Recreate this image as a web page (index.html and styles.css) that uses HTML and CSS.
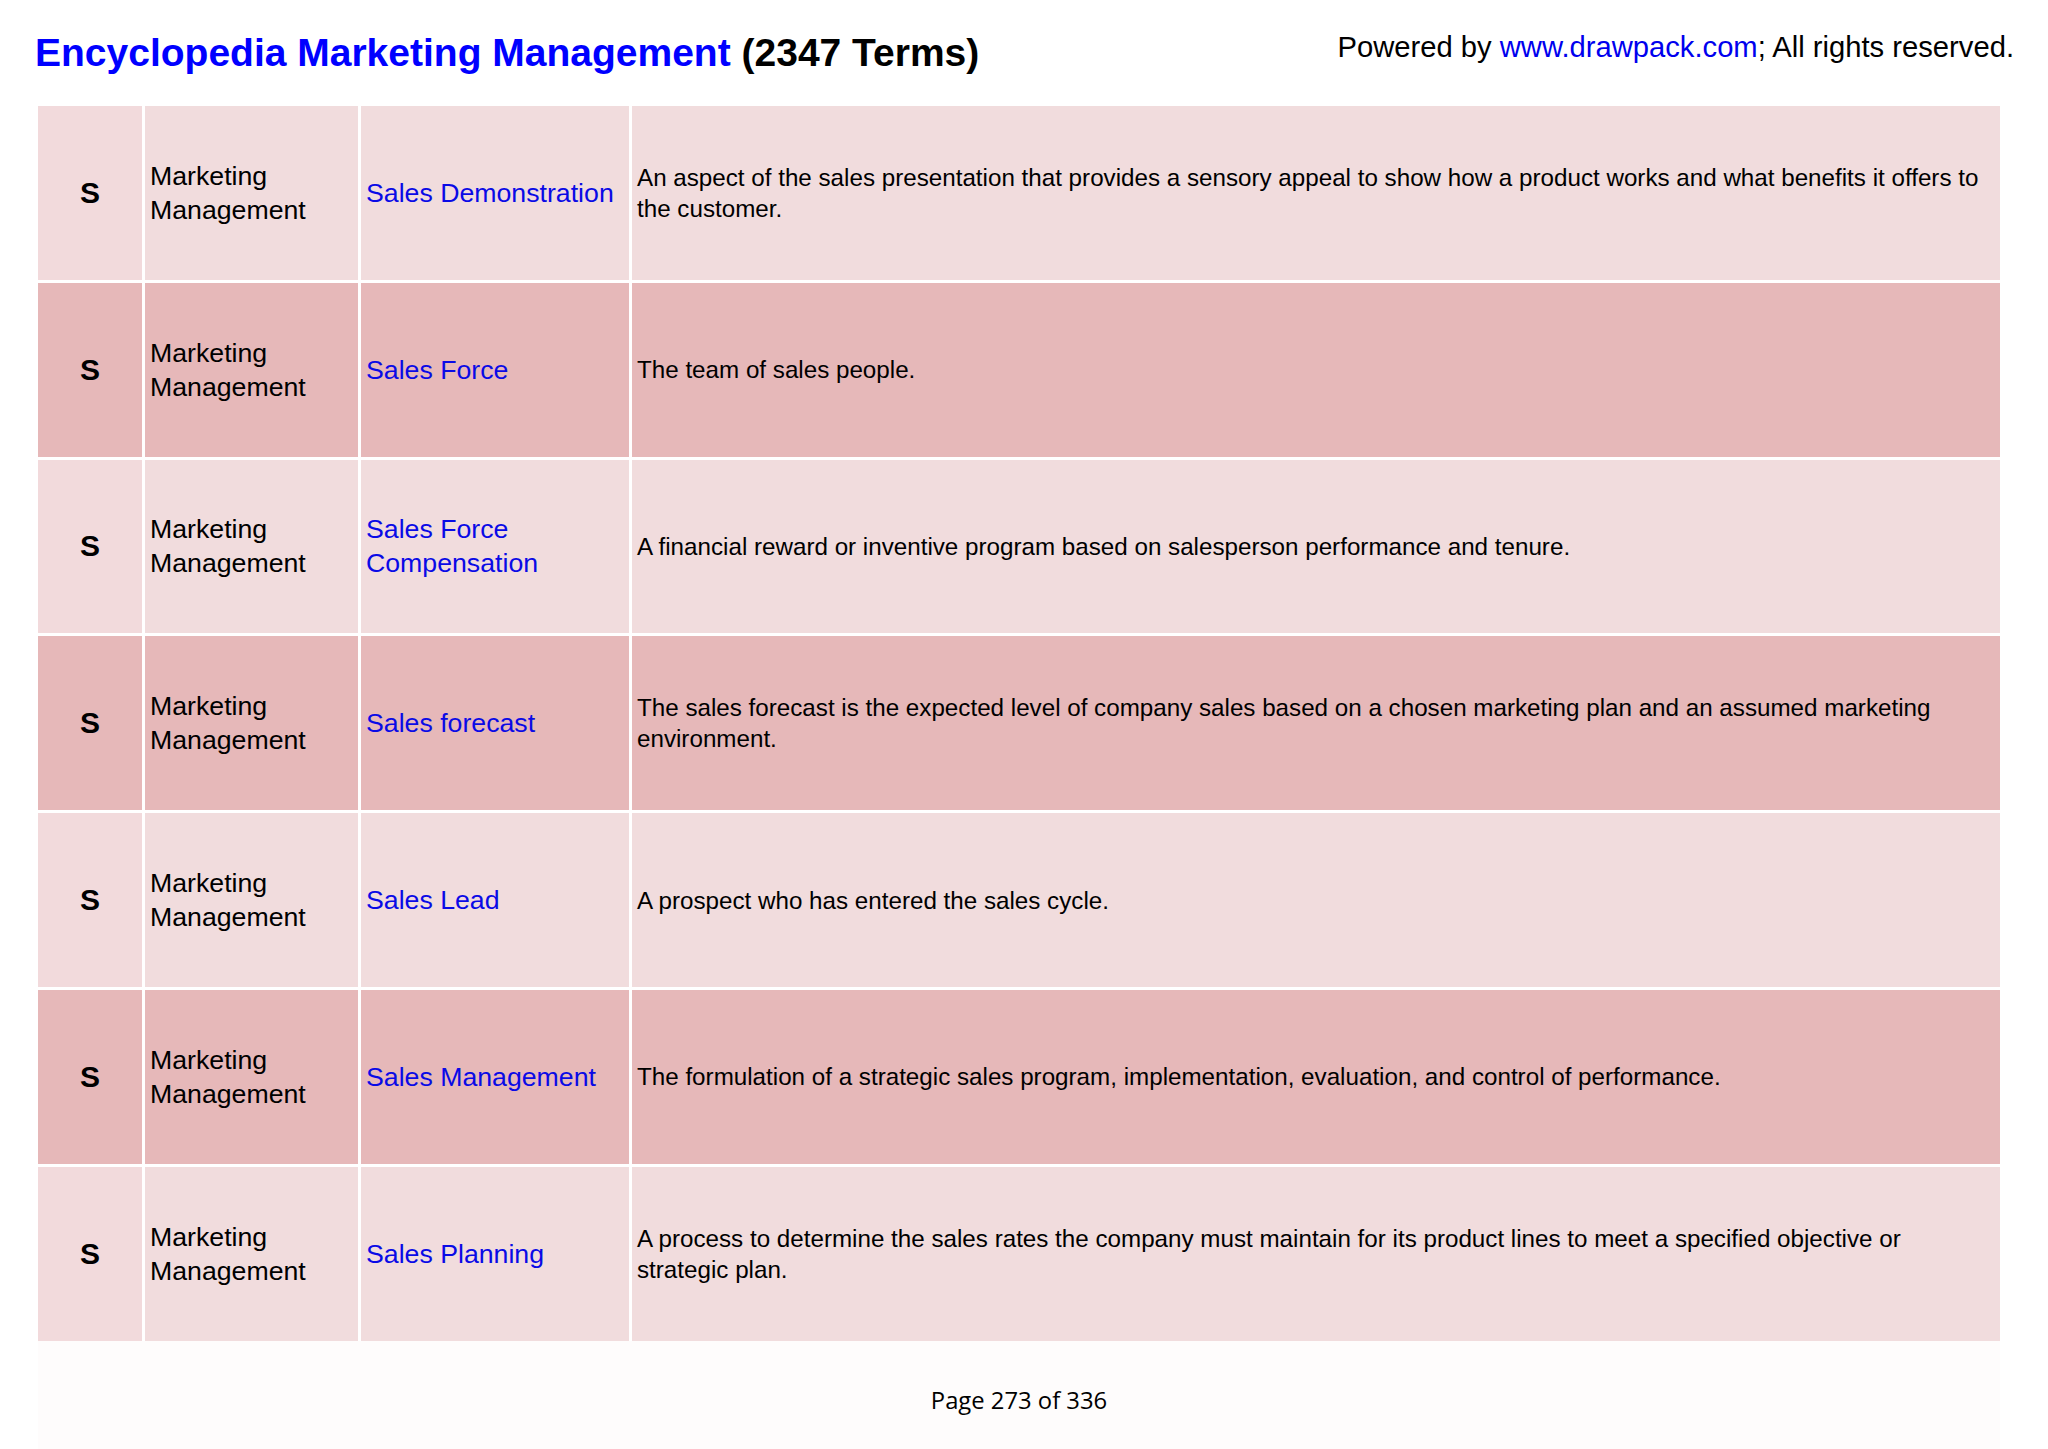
FILE: index.html
```html
<!DOCTYPE html>
<html lang="en">
<head>
<meta charset="utf-8">
<title>Encyclopedia Marketing Management</title>
<link rel="stylesheet" href="styles.css">
</head>
<body>
<div class="page">
  <header class="header">
    <h1 class="title"><span class="title-blue">Encyclopedia Marketing Management</span> (2347 Terms)</h1>
    <div class="powered">Powered by <a class="plink" href="#">www.drawpack.com</a>; All rights reserved.</div>
  </header>

  <div class="table">
    <div class="row light">
      <div class="cell letter">S</div>
      <div class="cell cat">Marketing Management</div>
      <div class="cell term"><a href="#">Sales Demonstration</a></div>
      <div class="cell desc">An aspect of the sales presentation that provides a sensory appeal to show how a product works and what benefits it offers to the customer.</div>
    </div>
    <div class="row dark">
      <div class="cell letter">S</div>
      <div class="cell cat">Marketing Management</div>
      <div class="cell term"><a href="#">Sales Force</a></div>
      <div class="cell desc">The team of sales people.</div>
    </div>
    <div class="row light">
      <div class="cell letter">S</div>
      <div class="cell cat">Marketing Management</div>
      <div class="cell term"><a href="#">Sales Force Compensation</a></div>
      <div class="cell desc">A financial reward or inventive program based on salesperson performance and tenure.</div>
    </div>
    <div class="row dark">
      <div class="cell letter">S</div>
      <div class="cell cat">Marketing Management</div>
      <div class="cell term"><a href="#">Sales forecast</a></div>
      <div class="cell desc">The sales forecast is the expected level of company sales based on a chosen marketing plan and an assumed marketing environment.</div>
    </div>
    <div class="row light">
      <div class="cell letter">S</div>
      <div class="cell cat">Marketing Management</div>
      <div class="cell term"><a href="#">Sales Lead</a></div>
      <div class="cell desc">A prospect who has entered the sales cycle.</div>
    </div>
    <div class="row dark">
      <div class="cell letter">S</div>
      <div class="cell cat">Marketing Management</div>
      <div class="cell term"><a href="#">Sales Management</a></div>
      <div class="cell desc">The formulation of a strategic sales program, implementation, evaluation, and control of performance.</div>
    </div>
    <div class="row light">
      <div class="cell letter">S</div>
      <div class="cell cat">Marketing Management</div>
      <div class="cell term"><a href="#">Sales Planning</a></div>
      <div class="cell desc">A process to determine the sales rates the company must maintain for its product lines to meet a specified objective or strategic plan.</div>
    </div>
  </div>

  <footer class="footer">Page 273 of 336</footer>
</div>
</body>
</html>
```

FILE: styles.css
```css
html, body {
  margin: 0;
  padding: 0;
  background: #ffffff;
}

.page {
  width: 2048px;
  height: 1449px;
  display: flex;
  flex-direction: column;
  font-family: "Liberation Sans", Arial, sans-serif;
  color: #000;
}

.header {
  display: flex;
  justify-content: space-between;
  align-items: flex-start;
  padding: 30px 34px 0 35px;
  height: 76px;
}

.title {
  margin: 0;
  font-size: 39px;
  line-height: 45px;
  font-weight: bold;
  color: #000;
}

.title-blue {
  color: #0000ff;
}

.powered {
  margin-top: 1px;
  font-size: 29.2px;
  line-height: 33px;
}

.plink {
  color: #0000ee;
  text-decoration: none;
}

.table {
  margin-left: 38px;
  width: 1962px;
  display: grid;
  grid-template-rows: repeat(7, 173.8px);
  row-gap: 3px;
  background: #ffffff;
}

.row {
  display: grid;
  grid-template-columns: 104px 213px 268px 1fr;
  column-gap: 3px;
}

.row.light .cell {
  background: #f1dcdd;
}

.row.dark .cell {
  background: #e6b8b9;
}

.row.light .cell.letter {
  background: #f2dadc;
}

.cell {
  display: flex;
  align-items: center;
  padding-left: 5px;
  box-sizing: border-box;
}

.letter {
  justify-content: center;
  padding-left: 0;
  font-weight: bold;
  font-size: 30px;
}

.cat {
  font-size: 26.7px;
  line-height: 34px;
  padding-right: 20px;
}

.term {
  font-size: 26.7px;
  line-height: 34px;
  padding-right: 8px;
}

.term a {
  color: #0a0ae6;
  text-decoration: none;
}

.desc {
  font-size: 24.2px;
  line-height: 31px;
  padding-right: 14px;
}

.footer {
  margin-left: 38px;
  width: 1962px;
  flex: 1;
  display: flex;
  align-items: center;
  justify-content: center;
  background: #fefcfc;
  font-family: "Open Sans", "Liberation Sans", sans-serif;
  font-size: 23.8px;
  padding-top: 10px;
  box-sizing: border-box;
}
```
